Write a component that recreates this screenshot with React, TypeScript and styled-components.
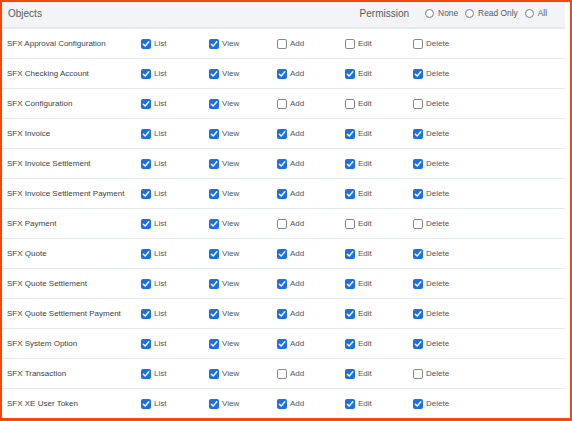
import React from "react";
import styled, { createGlobalStyle } from "styled-components";

const Global = createGlobalStyle`
  html, body { margin: 0; padding: 0; background: #fff; }
  body { font-family: "Liberation Sans", Arial, sans-serif; }
  * { box-sizing: border-box; }
`;

const Frame = styled.div`
  width: 572px;
  height: 421px;
  border: 2px solid #f4470f;
  border-bottom-width: 3px;
  padding-right: 5px;
  overflow: hidden;
  background: #fff;
`;

const Header = styled.div`
  height: 27px;
  background: #f2f4f5;
  border-bottom: 2px solid #e6e9eb;
  display: flex;
  align-items: center;
  padding: 0 0 3px 6px;
`;

const HeaderTitle = styled.div`
  font-size: 10px;
  color: #555b61;
  flex: 1;
`;

const PermLabel = styled.div`
  font-size: 10px;
  color: #555b61;
  margin-right: 16px;
`;

const RadioItem = styled.label`
  display: flex;
  align-items: center;
  font-size: 8.4px;
  color: #555b61;
  margin-right: 7px;
  &:last-child { margin-right: 18px; }
`;

const RadioCircle = styled.span`
  width: 9px;
  height: 9px;
  border-radius: 50%;
  border: 1px solid #7a7f84;
  background: #fff;
  margin-right: 4px;
  display: inline-block;
`;

const Row = styled.div`
  height: 30px;
  display: grid;
  grid-template-columns: 134px repeat(5, 68px);
  align-items: center;
  padding-left: 5px;
  border-bottom: 1.5px solid #e6e9eb;
`;

const Name = styled.div`
  font-size: 8px;
  color: #3d4247;
  white-space: nowrap;
`;

const Cell = styled.div`
  display: flex;
  align-items: center;
  font-size: 8px;
  color: #50555a;
`;

const Box = styled.span<{ $on: boolean }>`
  width: 10px;
  height: 10px;
  border-radius: 2px;
  margin-right: 3px;
  display: inline-flex;
  align-items: center;
  justify-content: center;
  background: ${(p) => (p.$on ? "#1a6fe3" : "#fff")};
  border: ${(p) => (p.$on ? "none" : "1px solid #85898d")};
`;

const Check = () => (
  <svg width="8" height="8" viewBox="0 0 8 8">
    <path d="M1.3 4.2 L3.2 6 L6.8 1.8" fill="none" stroke="#fff" strokeWidth="1.4" strokeLinecap="round" strokeLinejoin="round" />
  </svg>
);

const perms = ["List", "View", "Add", "Edit", "Delete"];

const rows: [string, number[]][] = [
  ["SFX Approval Configuration", [1, 1, 0, 0, 0]],
  ["SFX Checking Account", [1, 1, 1, 1, 1]],
  ["SFX Configuration", [1, 1, 0, 0, 0]],
  ["SFX Invoice", [1, 1, 1, 1, 1]],
  ["SFX Invoice Settlement", [1, 1, 1, 1, 1]],
  ["SFX Invoice Settlement Payment", [1, 1, 1, 1, 1]],
  ["SFX Payment", [1, 1, 0, 0, 0]],
  ["SFX Quote", [1, 1, 1, 1, 1]],
  ["SFX Quote Settlement", [1, 1, 1, 1, 1]],
  ["SFX Quote Settlement Payment", [1, 1, 1, 1, 1]],
  ["SFX System Option", [1, 1, 1, 1, 1]],
  ["SFX Transaction", [1, 1, 0, 1, 0]],
  ["SFX XE User Token", [1, 1, 1, 1, 1]],
];

export default function App() {
  return (
    <>
      <Global />
      <Frame>
        <Header>
          <HeaderTitle>Objects</HeaderTitle>
          <PermLabel>Permission</PermLabel>
          {["None", "Read Only", "All"].map((r) => (
            <RadioItem key={r}>
              <RadioCircle />
              {r}
            </RadioItem>
          ))}
        </Header>
        {rows.map(([name, vals]) => (
          <Row key={name}>
            <Name>{name}</Name>
            {perms.map((p, i) => (
              <Cell key={p}>
                <Box $on={!!vals[i]}>{vals[i] ? <Check /> : null}</Box>
                {p}
              </Cell>
            ))}
          </Row>
        ))}
      </Frame>
    </>
  );
}
